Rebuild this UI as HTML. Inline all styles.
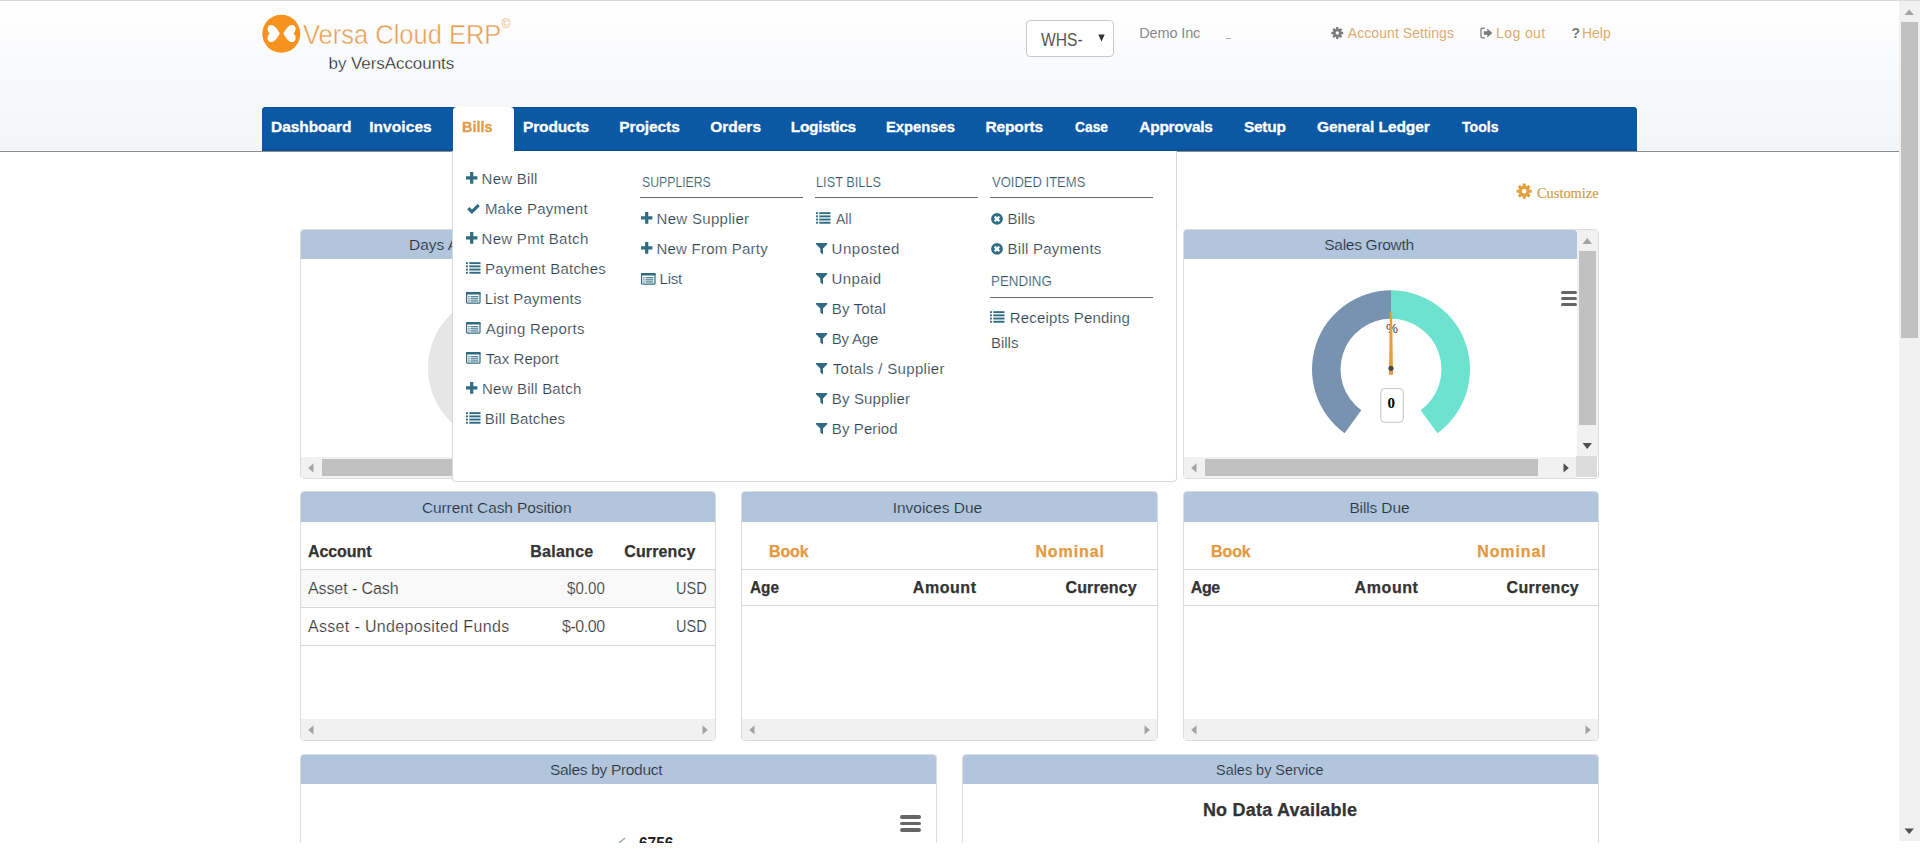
<!DOCTYPE html><html><head><meta charset="utf-8"><title>Versa Cloud ERP</title><style>html,body{margin:0;padding:0;width:1920px;height:852px;overflow:hidden;background:#fff}body{position:relative;font-family:"Liberation Sans",sans-serif}.t{position:absolute;white-space:nowrap}</style></head><body>
<div style="position:absolute;left:0px;top:0px;width:1920px;height:1px;background:#d9d9d9"></div>
<div style="position:absolute;left:0px;top:1px;width:1899px;height:150px;background:linear-gradient(#ffffff 0%,#f9fafc 40%,#f4f5f8 100%)"></div>
<div style="position:absolute;left:0px;top:151px;width:1899px;height:1px;background:#8c8c8c"></div>
<svg style="position:absolute;left:258px;top:10px;" width="48" height="48" viewBox="0 0 48 48">
<circle cx="23.3" cy="23.8" r="19" fill="#f6931f"/>
<g fill="#fff">
<path transform="translate(9.3,14.8)" d="M2.4,8.7 C-0.7,6.2 -0.6,0.3 3.8,0.1 C7.4,0 10.2,4.6 12.6,8.7 C10.2,12.8 7.4,17.4 3.8,17.3 C-0.6,17.1 -0.7,11.2 2.4,8.7 Z"/>
<path transform="translate(37.9,14.8) scale(-1,1)" d="M2.4,8.7 C-0.7,6.2 -0.6,0.3 3.8,0.1 C7.4,0 10.2,4.6 12.6,8.7 C10.2,12.8 7.4,17.4 3.8,17.3 C-0.6,17.1 -0.7,11.2 2.4,8.7 Z"/>
</g></svg>
<div class="t" style="left:302.70px;top:21.70px;font-family:'Liberation Sans';font-size:27px;line-height:27px;font-weight:normal;color:#e89f50;letter-spacing:0.000px;transform:scaleX(0.9441);transform-origin:0 0;-webkit-text-stroke:0.45px #fdfdfe;">Versa Cloud ERP</div>
<div class="t" style="left:501.50px;top:17.70px;font-family:'Liberation Sans';font-size:12px;line-height:12px;font-weight:normal;color:#f0b070;letter-spacing:0.000px;">©</div>
<div class="t" style="left:328.50px;top:55.20px;font-family:'Liberation Sans';font-size:17px;line-height:17px;font-weight:normal;color:#1a1a1a;letter-spacing:-0.066px;-webkit-text-stroke:0.3px #fafbfc;">by VersAccounts</div>
<div style="position:absolute;left:1026px;top:20px;width:86px;height:35px;background:#fff;border:1px solid #c8c8c8;border-radius:4px;box-sizing:content-box"></div>
<div class="t" style="left:1041.30px;top:29.80px;font-family:'Liberation Sans';font-size:19px;line-height:19px;font-weight:normal;color:#555;letter-spacing:0.000px;transform:scaleX(0.8226);transform-origin:0 0;">WHS-</div>
<svg style="position:absolute;left:1098px;top:34px;" width="8" height="8" viewBox="0 0 8 8"><path d="M0.3,0.6 H6.7 L3.5,7.4 Z" fill="#333"/></svg>
<div class="t" style="left:1139.20px;top:25.80px;font-family:'Liberation Sans';font-size:14.5px;line-height:14.5px;font-weight:normal;color:#8a8a8a;letter-spacing:-0.129px;">Demo Inc</div>
<div style="position:absolute;left:1226px;top:38px;width:5px;height:1px;background:#b0b0b0"></div>
<svg style="position:absolute;left:1331px;top:27px;" width="13" height="13" viewBox="0 0 13 13"><g fill="#7a7a7a"><circle cx="6.3" cy="6" r="4.3"/><path d="M5.15,9.30 L7.45,9.30 L7.45,11.90 L5.15,11.90 Z M3.15,7.52 L4.78,9.15 L2.94,10.99 L1.31,9.36 Z M3.00,4.85 L3.00,7.15 L0.40,7.15 L0.40,4.85 Z M4.78,2.85 L3.15,4.48 L1.31,2.64 L2.94,1.01 Z M7.45,2.70 L5.15,2.70 L5.15,0.10 L7.45,0.10 Z M9.45,4.48 L7.82,2.85 L9.66,1.01 L11.29,2.64 Z M9.60,7.15 L9.60,4.85 L12.20,4.85 L12.20,7.15 Z M7.82,9.15 L9.45,7.52 L11.29,9.36 L9.66,10.99 Z"/></g><circle cx="6.3" cy="6" r="1.7" fill="#f7f8fa"/></svg>
<div class="t" style="left:1347.80px;top:25.70px;font-family:'Liberation Sans';font-size:14px;line-height:14px;font-weight:normal;color:#dcab72;letter-spacing:0.069px;">Account Settings</div>
<svg style="position:absolute;left:1480px;top:27px;" width="13" height="12" viewBox="0 0 13 12"><path d="M4.8,1.2 H2.2 Q1,1.2 1,2.4 V9.6 Q1,10.8 2.2,10.8 H4.8" fill="none" stroke="#8a8a8a" stroke-width="1.4"/><path d="M3.8,4.2 H7.3 V1.6 L12.3,6 L7.3,10.4 V7.8 H3.8 Z" fill="#7a7a7a"/></svg>
<div class="t" style="left:1496.10px;top:25.70px;font-family:'Liberation Sans';font-size:14px;line-height:14px;font-weight:normal;color:#dcab72;letter-spacing:0.397px;">Log out</div>
<div class="t" style="left:1571.60px;top:25.70px;font-family:'Liberation Sans';font-size:14px;line-height:14px;font-weight:bold;color:#777;letter-spacing:0.000px;">?</div>
<div class="t" style="left:1582.00px;top:25.70px;font-family:'Liberation Sans';font-size:14px;line-height:14px;font-weight:normal;color:#dcab72;letter-spacing:-0.036px;">Help</div>
<div style="position:absolute;left:262px;top:107px;width:1375px;height:44px;background:#0b58a5;border-radius:4px 4px 0 0;box-shadow:inset 0 1px 0 #0a4f92, inset 0 -2px 0 #0a5096"></div>
<div style="position:absolute;left:453px;top:107px;width:61px;height:50px;background:#fff;border-radius:4px 4px 0 0"></div>
<div class="t" style="left:271.10px;top:119.30px;font-family:'Liberation Sans';font-size:15.5px;line-height:15.5px;font-weight:bold;color:#ffffff;letter-spacing:-0.074px;-webkit-text-stroke:0.3px #ffffff;">Dashboard</div>
<div class="t" style="left:369.20px;top:119.30px;font-family:'Liberation Sans';font-size:15.5px;line-height:15.5px;font-weight:bold;color:#ffffff;letter-spacing:0.070px;-webkit-text-stroke:0.3px #ffffff;">Invoices</div>
<div class="t" style="left:462.17px;top:119.30px;font-family:'Liberation Sans';font-size:15.5px;line-height:15.5px;font-weight:bold;color:#e59a45;letter-spacing:0.000px;transform:scaleX(0.9321);transform-origin:0 0;-webkit-text-stroke:0.3px #e59a45;">Bills</div>
<div class="t" style="left:523.00px;top:119.30px;font-family:'Liberation Sans';font-size:15.5px;line-height:15.5px;font-weight:bold;color:#ffffff;letter-spacing:-0.151px;-webkit-text-stroke:0.3px #ffffff;">Products</div>
<div class="t" style="left:619.20px;top:119.30px;font-family:'Liberation Sans';font-size:15.5px;line-height:15.5px;font-weight:bold;color:#ffffff;letter-spacing:-0.078px;-webkit-text-stroke:0.3px #ffffff;">Projects</div>
<div class="t" style="left:710.20px;top:119.30px;font-family:'Liberation Sans';font-size:15.5px;line-height:15.5px;font-weight:bold;color:#ffffff;letter-spacing:-0.002px;-webkit-text-stroke:0.3px #ffffff;">Orders</div>
<div class="t" style="left:790.80px;top:119.30px;font-family:'Liberation Sans';font-size:15.5px;line-height:15.5px;font-weight:bold;color:#ffffff;letter-spacing:-0.340px;-webkit-text-stroke:0.3px #ffffff;">Logistics</div>
<div class="t" style="left:886.45px;top:119.30px;font-family:'Liberation Sans';font-size:15.5px;line-height:15.5px;font-weight:bold;color:#ffffff;letter-spacing:0.000px;transform:scaleX(0.9526);transform-origin:0 0;-webkit-text-stroke:0.3px #ffffff;">Expenses</div>
<div class="t" style="left:985.40px;top:119.30px;font-family:'Liberation Sans';font-size:15.5px;line-height:15.5px;font-weight:bold;color:#ffffff;letter-spacing:-0.124px;-webkit-text-stroke:0.3px #ffffff;">Reports</div>
<div class="t" style="left:1074.50px;top:119.30px;font-family:'Liberation Sans';font-size:15.5px;line-height:15.5px;font-weight:bold;color:#ffffff;letter-spacing:0.000px;transform:scaleX(0.8922);transform-origin:0 0;-webkit-text-stroke:0.3px #ffffff;">Case</div>
<div class="t" style="left:1139.30px;top:119.30px;font-family:'Liberation Sans';font-size:15.5px;line-height:15.5px;font-weight:bold;color:#ffffff;letter-spacing:-0.272px;-webkit-text-stroke:0.3px #ffffff;">Approvals</div>
<div class="t" style="left:1243.90px;top:119.30px;font-family:'Liberation Sans';font-size:15.5px;line-height:15.5px;font-weight:bold;color:#ffffff;letter-spacing:-0.247px;-webkit-text-stroke:0.3px #ffffff;">Setup</div>
<div class="t" style="left:1317.00px;top:119.30px;font-family:'Liberation Sans';font-size:15.5px;line-height:15.5px;font-weight:bold;color:#ffffff;letter-spacing:-0.067px;-webkit-text-stroke:0.3px #ffffff;">General Ledger</div>
<div class="t" style="left:1461.80px;top:119.30px;font-family:'Liberation Sans';font-size:15.5px;line-height:15.5px;font-weight:bold;color:#ffffff;letter-spacing:0.000px;transform:scaleX(0.9125);transform-origin:0 0;-webkit-text-stroke:0.3px #ffffff;">Tools</div>
<div style="position:absolute;left:300px;top:229px;width:856px;height:248px;background:#fff;border:1px solid #dcdcdc;border-radius:4px"></div>
<div style="position:absolute;left:301px;top:230px;width:856px;height:29px;background:#b1c5dc;border-radius:3px 3px 0 0"></div>
<div class="t" style="left:409.00px;top:236.70px;font-family:'Liberation Sans';font-size:15.5px;line-height:15.5px;font-weight:normal;color:#28323c;letter-spacing:0.000px;-webkit-text-stroke:0.2px #b1c5dc;">Days AP Outstanding</div>
<svg style="position:absolute;left:420px;top:290px;" width="170" height="160" viewBox="0 0 170 160"><circle cx="83" cy="78" r="75" fill="#e6e6e6"/></svg>
<div style="position:absolute;left:301px;top:457px;width:856px;height:21px;background:#f1f1f1"></div>
<svg style="position:absolute;left:308px;top:463px;" width="6" height="10" viewBox="0 0 6 10"><path d="M5.5,0.2 V9.6 L0.2,4.9 Z" fill="#a3a3a3"/></svg>
<svg style="position:absolute;left:1144px;top:463px;" width="6" height="10" viewBox="0 0 6 10"><path d="M0.5,0.2 V9.6 L5.8,4.9 Z" fill="#a3a3a3"/></svg>
<div style="position:absolute;left:322px;top:459px;width:778px;height:17px;background:#c1c1c1"></div>
<div style="position:absolute;left:1183px;top:229px;width:414px;height:248px;background:#fff;border:1px solid #dcdcdc;border-radius:4px"></div>
<div style="position:absolute;left:1184px;top:230px;width:393px;height:29px;background:#b1c5dc;border-radius:3px 3px 0 0"></div>
<div class="t" style="left:1324.30px;top:236.90px;font-family:'Liberation Sans';font-size:15.5px;line-height:15.5px;font-weight:normal;color:#28323c;letter-spacing:-0.292px;-webkit-text-stroke:0.2px #b1c5dc;">Sales Growth</div>
<div style="position:absolute;left:1577px;top:230px;width:21px;height:227px;background:#f1f1f1"></div>
<svg style="position:absolute;left:1582px;top:237px;" width="11" height="8" viewBox="0 0 11 8"><path d="M0.5,7 H10 L5.25,1 Z" fill="#a3a3a3"/></svg>
<div style="position:absolute;left:1579px;top:251px;width:17px;height:174px;background:#c1c1c1"></div>
<svg style="position:absolute;left:1582px;top:442px;" width="11" height="8" viewBox="0 0 11 8"><path d="M0.5,1 H10 L5.25,7 Z" fill="#505050"/></svg>
<div style="position:absolute;left:1576px;top:456px;width:21px;height:21px;background:#dcdcdc"></div>
<div style="position:absolute;left:1184px;top:457px;width:392px;height:21px;background:#f1f1f1"></div>
<svg style="position:absolute;left:1191px;top:463px;" width="6" height="10" viewBox="0 0 6 10"><path d="M5.5,0.2 V9.6 L0.2,4.9 Z" fill="#a3a3a3"/></svg>
<svg style="position:absolute;left:1563px;top:463px;" width="6" height="10" viewBox="0 0 6 10"><path d="M0.5,0.2 V9.6 L5.8,4.9 Z" fill="#505050"/></svg>
<div style="position:absolute;left:1205px;top:459px;width:333px;height:17px;background:#c1c1c1"></div>
<div style="position:absolute;left:1561px;top:291px;width:16px;height:3.4px;background:#666;border-radius:1.5px"></div>
<div style="position:absolute;left:1561px;top:297px;width:16px;height:3.4px;background:#666;border-radius:1.5px"></div>
<div style="position:absolute;left:1561px;top:303px;width:16px;height:3.4px;background:#666;border-radius:1.5px"></div>
<div class="t" style="left:1386.00px;top:322.30px;font-family:'Liberation Sans';font-size:13.5px;line-height:13.5px;font-weight:normal;color:#3a3a3a;letter-spacing:0.000px;">%</div>
<svg style="position:absolute;left:1300px;top:280px;" width="180" height="160" viewBox="0 0 180 160"><path d="M44.56,153.21 A79,79 0 0 1 91.00,10.30 L91.00,38.80 A50.5,50.5 0 0 0 61.32,130.16 Z" fill="#7893b0"/><path d="M91.00,10.30 A79,79 0 0 1 137.44,153.21 L120.68,130.16 A50.5,50.5 0 0 0 91.00,38.80 Z" fill="#6ce2cf"/><path d="M89.90,32 L92.10,32 L92.90,89.30 L92.90,95 L89.10,95 L89.10,89.30 Z" fill="#e99c3d"/><circle cx="91.00" cy="88.30" r="2.6" fill="#4a4a4a"/><rect x="80.8" y="108.6" width="22.5" height="33.6" rx="3.5" fill="#fff" stroke="#c4c4c4" stroke-width="1"/></svg>
<div class="t" style="left:1387.40px;top:396.30px;font-family:'Liberation Serif';font-size:15px;line-height:15px;font-weight:bold;color:#000;letter-spacing:0.000px;">0</div>
<div style="position:absolute;left:300px;top:491px;width:414px;height:248px;background:#fff;border:1px solid #dcdcdc;border-radius:4px"></div>
<div style="position:absolute;left:301px;top:492px;width:414px;height:30px;background:#b1c5dc;border-radius:3px 3px 0 0"></div>
<div class="t" style="left:421.90px;top:500.00px;font-family:'Liberation Sans';font-size:15.5px;line-height:15.5px;font-weight:normal;color:#28323c;letter-spacing:-0.100px;-webkit-text-stroke:0.2px #b1c5dc;">Current Cash Position</div>
<div class="t" style="left:307.90px;top:543.60px;font-family:'Liberation Sans';font-size:16px;line-height:16px;font-weight:bold;color:#333;letter-spacing:-0.045px;-webkit-text-stroke:0.25px #333">Account</div>
<div class="t" style="left:530.30px;top:543.60px;font-family:'Liberation Sans';font-size:16px;line-height:16px;font-weight:bold;color:#333;letter-spacing:0.255px;-webkit-text-stroke:0.25px #333">Balance</div>
<div class="t" style="left:624.30px;top:543.60px;font-family:'Liberation Sans';font-size:16px;line-height:16px;font-weight:bold;color:#333;letter-spacing:0.107px;-webkit-text-stroke:0.25px #333">Currency</div>
<div style="position:absolute;left:301px;top:569px;width:414px;height:1px;background:#d6d6d6"></div>
<div style="position:absolute;left:301px;top:570px;width:414px;height:37px;background:#f9f9f9"></div>
<div class="t" style="left:307.90px;top:580.70px;font-family:'Liberation Sans';font-size:16px;line-height:16px;font-weight:normal;color:#383838;letter-spacing:-0.072px;-webkit-text-stroke:0.2px #f9f9f9;">Asset - Cash</div>
<div class="t" style="left:567.40px;top:580.70px;font-family:'Liberation Sans';font-size:16px;line-height:16px;font-weight:normal;color:#383838;letter-spacing:0.000px;transform:scaleX(0.9442);transform-origin:0 0;-webkit-text-stroke:0.2px #f9f9f9;">$0.00</div>
<div class="t" style="left:676.49px;top:580.70px;font-family:'Liberation Sans';font-size:16px;line-height:16px;font-weight:normal;color:#383838;letter-spacing:0.000px;transform:scaleX(0.9092);transform-origin:0 0;-webkit-text-stroke:0.2px #f9f9f9;">USD</div>
<div style="position:absolute;left:301px;top:607px;width:414px;height:1px;background:#d6d6d6"></div>
<div class="t" style="left:307.90px;top:618.60px;font-family:'Liberation Sans';font-size:16px;line-height:16px;font-weight:normal;color:#383838;letter-spacing:0.346px;-webkit-text-stroke:0.2px #fff;">Asset - Undeposited Funds</div>
<div class="t" style="left:561.90px;top:618.60px;font-family:'Liberation Sans';font-size:16px;line-height:16px;font-weight:normal;color:#383838;letter-spacing:-0.414px;-webkit-text-stroke:0.2px #fff;">$-0.00</div>
<div class="t" style="left:676.49px;top:618.60px;font-family:'Liberation Sans';font-size:16px;line-height:16px;font-weight:normal;color:#383838;letter-spacing:0.000px;transform:scaleX(0.9092);transform-origin:0 0;-webkit-text-stroke:0.2px #fff;">USD</div>
<div style="position:absolute;left:301px;top:645px;width:414px;height:1px;background:#d6d6d6"></div>
<div style="position:absolute;left:301px;top:719px;width:414px;height:21px;background:#f1f1f1"></div>
<svg style="position:absolute;left:308px;top:725px;" width="6" height="10" viewBox="0 0 6 10"><path d="M5.5,0.2 V9.6 L0.2,4.9 Z" fill="#a3a3a3"/></svg>
<svg style="position:absolute;left:702px;top:725px;" width="6" height="10" viewBox="0 0 6 10"><path d="M0.5,0.2 V9.6 L5.8,4.9 Z" fill="#a3a3a3"/></svg>
<div style="position:absolute;left:741px;top:491px;width:415px;height:248px;background:#fff;border:1px solid #dcdcdc;border-radius:4px"></div>
<div style="position:absolute;left:742px;top:492px;width:415px;height:30px;background:#b1c5dc;border-radius:3px 3px 0 0"></div>
<div class="t" style="left:892.70px;top:500.00px;font-family:'Liberation Sans';font-size:15.5px;line-height:15.5px;font-weight:normal;color:#28323c;letter-spacing:-0.016px;-webkit-text-stroke:0.2px #b1c5dc;">Invoices Due</div>
<div class="t" style="left:769.10px;top:544.00px;font-family:'Liberation Sans';font-size:16px;line-height:16px;font-weight:bold;color:#e5993f;letter-spacing:-0.167px;-webkit-text-stroke:0.25px #e5993f">Book</div>
<div class="t" style="left:1035.40px;top:544.00px;font-family:'Liberation Sans';font-size:16px;line-height:16px;font-weight:bold;color:#e5993f;letter-spacing:0.905px;-webkit-text-stroke:0.25px #e5993f">Nominal</div>
<div style="position:absolute;left:742px;top:569px;width:415px;height:1px;background:#d6d6d6"></div>
<div class="t" style="left:749.50px;top:579.50px;font-family:'Liberation Sans';font-size:16px;line-height:16px;font-weight:bold;color:#333;letter-spacing:0.000px;transform:scaleX(0.9595);transform-origin:0 0;-webkit-text-stroke:0.25px #333">Age</div>
<div class="t" style="left:912.80px;top:579.50px;font-family:'Liberation Sans';font-size:16px;line-height:16px;font-weight:bold;color:#333;letter-spacing:0.560px;-webkit-text-stroke:0.25px #333">Amount</div>
<div class="t" style="left:1065.50px;top:579.50px;font-family:'Liberation Sans';font-size:16px;line-height:16px;font-weight:bold;color:#333;letter-spacing:0.135px;-webkit-text-stroke:0.25px #333">Currency</div>
<div style="position:absolute;left:742px;top:605px;width:415px;height:1px;background:#d6d6d6"></div>
<div style="position:absolute;left:742px;top:719px;width:415px;height:21px;background:#f1f1f1"></div>
<svg style="position:absolute;left:749px;top:725px;" width="6" height="10" viewBox="0 0 6 10"><path d="M5.5,0.2 V9.6 L0.2,4.9 Z" fill="#a3a3a3"/></svg>
<svg style="position:absolute;left:1144px;top:725px;" width="6" height="10" viewBox="0 0 6 10"><path d="M0.5,0.2 V9.6 L5.8,4.9 Z" fill="#a3a3a3"/></svg>
<div style="position:absolute;left:1183px;top:491px;width:414px;height:248px;background:#fff;border:1px solid #dcdcdc;border-radius:4px"></div>
<div style="position:absolute;left:1184px;top:492px;width:414px;height:30px;background:#b1c5dc;border-radius:3px 3px 0 0"></div>
<div class="t" style="left:1349.40px;top:500.00px;font-family:'Liberation Sans';font-size:15.5px;line-height:15.5px;font-weight:normal;color:#28323c;letter-spacing:-0.130px;-webkit-text-stroke:0.2px #b1c5dc;">Bills Due</div>
<div class="t" style="left:1211.10px;top:544.00px;font-family:'Liberation Sans';font-size:16px;line-height:16px;font-weight:bold;color:#e5993f;letter-spacing:-0.134px;-webkit-text-stroke:0.25px #e5993f">Book</div>
<div class="t" style="left:1477.20px;top:544.00px;font-family:'Liberation Sans';font-size:16px;line-height:16px;font-weight:bold;color:#e5993f;letter-spacing:0.905px;-webkit-text-stroke:0.25px #e5993f">Nominal</div>
<div style="position:absolute;left:1184px;top:569px;width:414px;height:1px;background:#d6d6d6"></div>
<div class="t" style="left:1190.80px;top:579.50px;font-family:'Liberation Sans';font-size:16px;line-height:16px;font-weight:bold;color:#333;letter-spacing:-0.414px;-webkit-text-stroke:0.25px #333">Age</div>
<div class="t" style="left:1354.60px;top:579.50px;font-family:'Liberation Sans';font-size:16px;line-height:16px;font-weight:bold;color:#333;letter-spacing:0.580px;-webkit-text-stroke:0.25px #333">Amount</div>
<div class="t" style="left:1506.60px;top:579.50px;font-family:'Liberation Sans';font-size:16px;line-height:16px;font-weight:bold;color:#333;letter-spacing:0.264px;-webkit-text-stroke:0.25px #333">Currency</div>
<div style="position:absolute;left:1184px;top:605px;width:414px;height:1px;background:#d6d6d6"></div>
<div style="position:absolute;left:1184px;top:719px;width:414px;height:21px;background:#f1f1f1"></div>
<svg style="position:absolute;left:1191px;top:725px;" width="6" height="10" viewBox="0 0 6 10"><path d="M5.5,0.2 V9.6 L0.2,4.9 Z" fill="#a3a3a3"/></svg>
<svg style="position:absolute;left:1585px;top:725px;" width="6" height="10" viewBox="0 0 6 10"><path d="M0.5,0.2 V9.6 L5.8,4.9 Z" fill="#a3a3a3"/></svg>
<div style="position:absolute;left:300px;top:754px;width:635px;height:118px;background:#fff;border:1px solid #dcdcdc;border-radius:4px"></div>
<div style="position:absolute;left:301px;top:755px;width:635px;height:29px;background:#b1c5dc;border-radius:3px 3px 0 0"></div>
<div class="t" style="left:549.90px;top:761.90px;font-family:'Liberation Sans';font-size:15.5px;line-height:15.5px;font-weight:normal;color:#28323c;letter-spacing:-0.304px;-webkit-text-stroke:0.2px #b1c5dc;">Sales by Product</div>
<div style="position:absolute;left:899.5px;top:815px;width:21px;height:3.5px;background:#666;border-radius:2px"></div>
<div style="position:absolute;left:899.5px;top:821.5px;width:21px;height:3.5px;background:#666;border-radius:2px"></div>
<div style="position:absolute;left:899.5px;top:828px;width:21px;height:3.5px;background:#666;border-radius:2px"></div>
<div class="t" style="left:638.80px;top:835.00px;font-family:'Liberation Sans';font-size:17px;line-height:17px;font-weight:bold;color:#222;letter-spacing:0.000px;transform:scaleX(0.9100);transform-origin:0 0;">6756</div>
<svg style="position:absolute;left:618px;top:836px;" width="10" height="8" viewBox="0 0 10 8"><path d="M1,7 L7,2" stroke="#9ab" stroke-width="1.6"/></svg>
<div style="position:absolute;left:962px;top:754px;width:635px;height:118px;background:#fff;border:1px solid #dcdcdc;border-radius:4px"></div>
<div style="position:absolute;left:963px;top:755px;width:635px;height:29px;background:#b1c5dc;border-radius:3px 3px 0 0"></div>
<div class="t" style="left:1215.70px;top:761.70px;font-family:'Liberation Sans';font-size:15.5px;line-height:15.5px;font-weight:normal;color:#28323c;letter-spacing:0.000px;transform:scaleX(0.9310);transform-origin:0 0;-webkit-text-stroke:0.2px #b1c5dc;">Sales by Service</div>
<div class="t" style="left:1202.90px;top:800.80px;font-family:'Liberation Sans';font-size:18px;line-height:18px;font-weight:bold;color:#333;letter-spacing:0.214px;-webkit-text-stroke:0.25px #333">No Data Available</div>
<div style="position:absolute;left:0px;top:843px;width:1899px;height:9px;background:#fff"></div>
<div style="position:absolute;left:452px;top:151px;width:723px;height:330px;background:#fff;border:1px solid #d9d9d9;border-top:none;border-radius:0 0 4px 4px;box-sizing:content-box"></div>
<div style="position:absolute;left:453px;top:140px;width:61px;height:12px;background:#fff"></div>
<svg style="position:absolute;left:465.5px;top:172.0px;" width="12" height="12" viewBox="0 0 12 12"><path d="M4.1,0 H7.3 V4.3 H11.4 V7.5 H7.3 V11.8 H4.1 V7.5 H0 V4.3 H4.1 Z" fill="#2f6c83"/></svg>
<div class="t" style="left:481.60px;top:170.60px;font-family:'Liberation Sans';font-size:15px;line-height:15px;font-weight:normal;color:#2c4150;letter-spacing:0.236px;-webkit-text-stroke:0.2px #fff;">New Bill</div>
<svg style="position:absolute;left:466.5px;top:204.1px;" width="13" height="10" viewBox="0 0 13 10"><path d="M0.2,5.2 L2.4,3 L4.9,5.5 L10.6,0 L12.8,2.2 L4.9,10 Z" fill="#2f6c83"/></svg>
<div class="t" style="left:484.90px;top:200.60px;font-family:'Liberation Sans';font-size:15px;line-height:15px;font-weight:normal;color:#2c4150;letter-spacing:0.239px;-webkit-text-stroke:0.2px #fff;">Make Payment</div>
<svg style="position:absolute;left:465.5px;top:232.0px;" width="12" height="12" viewBox="0 0 12 12"><path d="M4.1,0 H7.3 V4.3 H11.4 V7.5 H7.3 V11.8 H4.1 V7.5 H0 V4.3 H4.1 Z" fill="#2f6c83"/></svg>
<div class="t" style="left:481.60px;top:230.60px;font-family:'Liberation Sans';font-size:15px;line-height:15px;font-weight:normal;color:#2c4150;letter-spacing:0.273px;-webkit-text-stroke:0.2px #fff;">New Pmt Batch</div>
<svg style="position:absolute;left:465.5px;top:262px;" width="15" height="12" viewBox="0 0 15 12"><rect x="0" y="0.2" width="1.9" height="1.9" fill="#2f6c83"/><rect x="3.3" y="0.2" width="11.2" height="1.9" fill="#2f6c83"/><rect x="0" y="3.4" width="1.9" height="1.9" fill="#2f6c83"/><rect x="3.3" y="3.4" width="11.2" height="1.9" fill="#2f6c83"/><rect x="0" y="6.6" width="1.9" height="1.9" fill="#2f6c83"/><rect x="3.3" y="6.6" width="11.2" height="1.9" fill="#2f6c83"/><rect x="0" y="9.8" width="1.9" height="1.9" fill="#2f6c83"/><rect x="3.3" y="9.8" width="11.2" height="1.9" fill="#2f6c83"/></svg>
<div class="t" style="left:484.90px;top:260.60px;font-family:'Liberation Sans';font-size:15px;line-height:15px;font-weight:normal;color:#2c4150;letter-spacing:0.238px;-webkit-text-stroke:0.2px #fff;">Payment Batches</div>
<svg style="position:absolute;left:465.8px;top:292.40000000000003px;" width="15" height="12" viewBox="0 0 15 12"><rect x="0.6" y="0.6" width="13.4" height="10.6" rx="1" fill="#fff" stroke="#2f6c83" stroke-width="1.2"/><rect x="0" y="0" width="14.6" height="2.6" rx="0.8" fill="#2f6c83"/><rect x="2.2" y="4.2" width="1.4" height="1.1" fill="#2f6c83"/><rect x="4.5" y="4.2" width="7.9" height="1.1" fill="#2f6c83"/><rect x="2.2" y="6.3" width="1.4" height="1.1" fill="#2f6c83"/><rect x="4.5" y="6.3" width="7.9" height="1.1" fill="#2f6c83"/><rect x="2.2" y="8.4" width="1.4" height="1.1" fill="#2f6c83"/><rect x="4.5" y="8.4" width="7.9" height="1.1" fill="#2f6c83"/></svg>
<div class="t" style="left:484.80px;top:290.60px;font-family:'Liberation Sans';font-size:15px;line-height:15px;font-weight:normal;color:#2c4150;letter-spacing:0.200px;-webkit-text-stroke:0.2px #fff;">List Payments</div>
<svg style="position:absolute;left:465.8px;top:322.40000000000003px;" width="15" height="12" viewBox="0 0 15 12"><rect x="0.6" y="0.6" width="13.4" height="10.6" rx="1" fill="#fff" stroke="#2f6c83" stroke-width="1.2"/><rect x="0" y="0" width="14.6" height="2.6" rx="0.8" fill="#2f6c83"/><rect x="2.2" y="4.2" width="1.4" height="1.1" fill="#2f6c83"/><rect x="4.5" y="4.2" width="7.9" height="1.1" fill="#2f6c83"/><rect x="2.2" y="6.3" width="1.4" height="1.1" fill="#2f6c83"/><rect x="4.5" y="6.3" width="7.9" height="1.1" fill="#2f6c83"/><rect x="2.2" y="8.4" width="1.4" height="1.1" fill="#2f6c83"/><rect x="4.5" y="8.4" width="7.9" height="1.1" fill="#2f6c83"/></svg>
<div class="t" style="left:485.80px;top:320.60px;font-family:'Liberation Sans';font-size:15px;line-height:15px;font-weight:normal;color:#2c4150;letter-spacing:0.296px;-webkit-text-stroke:0.2px #fff;">Aging Reports</div>
<svg style="position:absolute;left:465.8px;top:352.40000000000003px;" width="15" height="12" viewBox="0 0 15 12"><rect x="0.6" y="0.6" width="13.4" height="10.6" rx="1" fill="#fff" stroke="#2f6c83" stroke-width="1.2"/><rect x="0" y="0" width="14.6" height="2.6" rx="0.8" fill="#2f6c83"/><rect x="2.2" y="4.2" width="1.4" height="1.1" fill="#2f6c83"/><rect x="4.5" y="4.2" width="7.9" height="1.1" fill="#2f6c83"/><rect x="2.2" y="6.3" width="1.4" height="1.1" fill="#2f6c83"/><rect x="4.5" y="6.3" width="7.9" height="1.1" fill="#2f6c83"/><rect x="2.2" y="8.4" width="1.4" height="1.1" fill="#2f6c83"/><rect x="4.5" y="8.4" width="7.9" height="1.1" fill="#2f6c83"/></svg>
<div class="t" style="left:485.80px;top:350.60px;font-family:'Liberation Sans';font-size:15px;line-height:15px;font-weight:normal;color:#2c4150;letter-spacing:0.048px;-webkit-text-stroke:0.2px #fff;">Tax Report</div>
<svg style="position:absolute;left:465.5px;top:382.0px;" width="12" height="12" viewBox="0 0 12 12"><path d="M4.1,0 H7.3 V4.3 H11.4 V7.5 H7.3 V11.8 H4.1 V7.5 H0 V4.3 H4.1 Z" fill="#2f6c83"/></svg>
<div class="t" style="left:482.10px;top:380.60px;font-family:'Liberation Sans';font-size:15px;line-height:15px;font-weight:normal;color:#2c4150;letter-spacing:0.188px;-webkit-text-stroke:0.2px #fff;">New Bill Batch</div>
<svg style="position:absolute;left:465.5px;top:412px;" width="15" height="12" viewBox="0 0 15 12"><rect x="0" y="0.2" width="1.9" height="1.9" fill="#2f6c83"/><rect x="3.3" y="0.2" width="11.2" height="1.9" fill="#2f6c83"/><rect x="0" y="3.4" width="1.9" height="1.9" fill="#2f6c83"/><rect x="3.3" y="3.4" width="11.2" height="1.9" fill="#2f6c83"/><rect x="0" y="6.6" width="1.9" height="1.9" fill="#2f6c83"/><rect x="3.3" y="6.6" width="11.2" height="1.9" fill="#2f6c83"/><rect x="0" y="9.8" width="1.9" height="1.9" fill="#2f6c83"/><rect x="3.3" y="9.8" width="11.2" height="1.9" fill="#2f6c83"/></svg>
<div class="t" style="left:484.80px;top:410.60px;font-family:'Liberation Sans';font-size:15px;line-height:15px;font-weight:normal;color:#2c4150;letter-spacing:0.166px;-webkit-text-stroke:0.2px #fff;">Bill Batches</div>
<div class="t" style="left:641.50px;top:175.00px;font-family:'Liberation Sans';font-size:14.2px;line-height:14.2px;font-weight:normal;color:#2d566b;letter-spacing:0.000px;transform:scaleX(0.8639);transform-origin:0 0;-webkit-text-stroke:0.2px #fff;">SUPPLIERS</div>
<div style="position:absolute;left:640px;top:197px;width:163px;height:1px;background:#6b6b6b"></div>
<div class="t" style="left:816.00px;top:175.00px;font-family:'Liberation Sans';font-size:14.2px;line-height:14.2px;font-weight:normal;color:#2d566b;letter-spacing:0.000px;transform:scaleX(0.8989);transform-origin:0 0;-webkit-text-stroke:0.2px #fff;">LIST BILLS</div>
<div style="position:absolute;left:815px;top:197px;width:163px;height:1px;background:#6b6b6b"></div>
<div class="t" style="left:991.90px;top:175.00px;font-family:'Liberation Sans';font-size:14.2px;line-height:14.2px;font-weight:normal;color:#2d566b;letter-spacing:0.000px;transform:scaleX(0.9178);transform-origin:0 0;-webkit-text-stroke:0.2px #fff;">VOIDED ITEMS</div>
<div style="position:absolute;left:990px;top:197px;width:163px;height:1px;background:#6b6b6b"></div>
<div class="t" style="left:990.96px;top:273.60px;font-family:'Liberation Sans';font-size:14.2px;line-height:14.2px;font-weight:normal;color:#2d566b;letter-spacing:0.000px;transform:scaleX(0.9424);transform-origin:0 0;-webkit-text-stroke:0.2px #fff;">PENDING</div>
<div style="position:absolute;left:990px;top:297px;width:163px;height:1px;background:#6b6b6b"></div>
<svg style="position:absolute;left:640.5px;top:212.1px;" width="12" height="12" viewBox="0 0 12 12"><path d="M4.1,0 H7.3 V4.3 H11.4 V7.5 H7.3 V11.8 H4.1 V7.5 H0 V4.3 H4.1 Z" fill="#2f6c83"/></svg>
<div class="t" style="left:656.60px;top:210.70px;font-family:'Liberation Sans';font-size:15px;line-height:15px;font-weight:normal;color:#2c4150;letter-spacing:0.299px;-webkit-text-stroke:0.2px #fff;">New Supplier</div>
<svg style="position:absolute;left:640.5px;top:242.1px;" width="12" height="12" viewBox="0 0 12 12"><path d="M4.1,0 H7.3 V4.3 H11.4 V7.5 H7.3 V11.8 H4.1 V7.5 H0 V4.3 H4.1 Z" fill="#2f6c83"/></svg>
<div class="t" style="left:656.50px;top:240.70px;font-family:'Liberation Sans';font-size:15px;line-height:15px;font-weight:normal;color:#2c4150;letter-spacing:0.219px;-webkit-text-stroke:0.2px #fff;">New From Party</div>
<svg style="position:absolute;left:640.8px;top:272.5px;" width="15" height="12" viewBox="0 0 15 12"><rect x="0.6" y="0.6" width="13.4" height="10.6" rx="1" fill="#fff" stroke="#2f6c83" stroke-width="1.2"/><rect x="0" y="0" width="14.6" height="2.6" rx="0.8" fill="#2f6c83"/><rect x="2.2" y="4.2" width="1.4" height="1.1" fill="#2f6c83"/><rect x="4.5" y="4.2" width="7.9" height="1.1" fill="#2f6c83"/><rect x="2.2" y="6.3" width="1.4" height="1.1" fill="#2f6c83"/><rect x="4.5" y="6.3" width="7.9" height="1.1" fill="#2f6c83"/><rect x="2.2" y="8.4" width="1.4" height="1.1" fill="#2f6c83"/><rect x="4.5" y="8.4" width="7.9" height="1.1" fill="#2f6c83"/></svg>
<div class="t" style="left:659.50px;top:270.70px;font-family:'Liberation Sans';font-size:15px;line-height:15px;font-weight:normal;color:#2c4150;letter-spacing:-0.192px;-webkit-text-stroke:0.2px #fff;">List</div>
<svg style="position:absolute;left:815.5px;top:212px;" width="15" height="12" viewBox="0 0 15 12"><rect x="0" y="0.2" width="1.9" height="1.9" fill="#2f6c83"/><rect x="3.3" y="0.2" width="11.2" height="1.9" fill="#2f6c83"/><rect x="0" y="3.4" width="1.9" height="1.9" fill="#2f6c83"/><rect x="3.3" y="3.4" width="11.2" height="1.9" fill="#2f6c83"/><rect x="0" y="6.6" width="1.9" height="1.9" fill="#2f6c83"/><rect x="3.3" y="6.6" width="11.2" height="1.9" fill="#2f6c83"/><rect x="0" y="9.8" width="1.9" height="1.9" fill="#2f6c83"/><rect x="3.3" y="9.8" width="11.2" height="1.9" fill="#2f6c83"/></svg>
<div class="t" style="left:835.50px;top:210.70px;font-family:'Liberation Sans';font-size:15px;line-height:15px;font-weight:normal;color:#2c4150;letter-spacing:0.000px;transform:scaleX(0.9304);transform-origin:0 0;-webkit-text-stroke:0.2px #fff;">All</div>
<svg style="position:absolute;left:815.8px;top:243.1px;" width="12" height="12" viewBox="0 0 12 12"><path d="M0,0 H11.2 V1.2 L7,5.4 V11.6 L4.3,9.4 V5.4 L0,1.2 Z" fill="#2f6c83"/></svg>
<div class="t" style="left:831.60px;top:240.70px;font-family:'Liberation Sans';font-size:15px;line-height:15px;font-weight:normal;color:#2c4150;letter-spacing:0.519px;-webkit-text-stroke:0.2px #fff;">Unposted</div>
<svg style="position:absolute;left:815.8px;top:273.09999999999997px;" width="12" height="12" viewBox="0 0 12 12"><path d="M0,0 H11.2 V1.2 L7,5.4 V11.6 L4.3,9.4 V5.4 L0,1.2 Z" fill="#2f6c83"/></svg>
<div class="t" style="left:831.60px;top:270.70px;font-family:'Liberation Sans';font-size:15px;line-height:15px;font-weight:normal;color:#2c4150;letter-spacing:0.402px;-webkit-text-stroke:0.2px #fff;">Unpaid</div>
<svg style="position:absolute;left:815.8px;top:303.09999999999997px;" width="12" height="12" viewBox="0 0 12 12"><path d="M0,0 H11.2 V1.2 L7,5.4 V11.6 L4.3,9.4 V5.4 L0,1.2 Z" fill="#2f6c83"/></svg>
<div class="t" style="left:831.80px;top:300.70px;font-family:'Liberation Sans';font-size:15px;line-height:15px;font-weight:normal;color:#2c4150;letter-spacing:0.139px;-webkit-text-stroke:0.2px #fff;">By Total</div>
<svg style="position:absolute;left:815.8px;top:333.09999999999997px;" width="12" height="12" viewBox="0 0 12 12"><path d="M0,0 H11.2 V1.2 L7,5.4 V11.6 L4.3,9.4 V5.4 L0,1.2 Z" fill="#2f6c83"/></svg>
<div class="t" style="left:831.80px;top:330.70px;font-family:'Liberation Sans';font-size:15px;line-height:15px;font-weight:normal;color:#2c4150;letter-spacing:-0.204px;-webkit-text-stroke:0.2px #fff;">By Age</div>
<svg style="position:absolute;left:815.8px;top:363.09999999999997px;" width="12" height="12" viewBox="0 0 12 12"><path d="M0,0 H11.2 V1.2 L7,5.4 V11.6 L4.3,9.4 V5.4 L0,1.2 Z" fill="#2f6c83"/></svg>
<div class="t" style="left:832.80px;top:360.70px;font-family:'Liberation Sans';font-size:15px;line-height:15px;font-weight:normal;color:#2c4150;letter-spacing:0.311px;-webkit-text-stroke:0.2px #fff;">Totals / Supplier</div>
<svg style="position:absolute;left:815.8px;top:393.09999999999997px;" width="12" height="12" viewBox="0 0 12 12"><path d="M0,0 H11.2 V1.2 L7,5.4 V11.6 L4.3,9.4 V5.4 L0,1.2 Z" fill="#2f6c83"/></svg>
<div class="t" style="left:831.80px;top:390.70px;font-family:'Liberation Sans';font-size:15px;line-height:15px;font-weight:normal;color:#2c4150;letter-spacing:0.149px;-webkit-text-stroke:0.2px #fff;">By Supplier</div>
<svg style="position:absolute;left:815.8px;top:423.09999999999997px;" width="12" height="12" viewBox="0 0 12 12"><path d="M0,0 H11.2 V1.2 L7,5.4 V11.6 L4.3,9.4 V5.4 L0,1.2 Z" fill="#2f6c83"/></svg>
<div class="t" style="left:831.80px;top:420.70px;font-family:'Liberation Sans';font-size:15px;line-height:15px;font-weight:normal;color:#2c4150;letter-spacing:0.101px;-webkit-text-stroke:0.2px #fff;">By Period</div>
<svg style="position:absolute;left:991.0px;top:212.5px;" width="13" height="13" viewBox="0 0 13 13"><circle cx="6" cy="5.9" r="5.9" fill="#2f6c83"/><path d="M3.7,3.6 L8.3,8.2 M8.3,3.6 L3.7,8.2" stroke="#fff" stroke-width="2.3"/></svg>
<div class="t" style="left:1007.60px;top:210.50px;font-family:'Liberation Sans';font-size:15px;line-height:15px;font-weight:normal;color:#2c4150;letter-spacing:-0.026px;-webkit-text-stroke:0.2px #fff;">Bills</div>
<svg style="position:absolute;left:991.0px;top:242.5px;" width="13" height="13" viewBox="0 0 13 13"><circle cx="6" cy="5.9" r="5.9" fill="#2f6c83"/><path d="M3.7,3.6 L8.3,8.2 M8.3,3.6 L3.7,8.2" stroke="#fff" stroke-width="2.3"/></svg>
<div class="t" style="left:1007.60px;top:240.50px;font-family:'Liberation Sans';font-size:15px;line-height:15px;font-weight:normal;color:#2c4150;letter-spacing:0.236px;-webkit-text-stroke:0.2px #fff;">Bill Payments</div>
<svg style="position:absolute;left:990.3px;top:311px;" width="15" height="12" viewBox="0 0 15 12"><rect x="0" y="0.2" width="1.9" height="1.9" fill="#2f6c83"/><rect x="3.3" y="0.2" width="11.2" height="1.9" fill="#2f6c83"/><rect x="0" y="3.4" width="1.9" height="1.9" fill="#2f6c83"/><rect x="3.3" y="3.4" width="11.2" height="1.9" fill="#2f6c83"/><rect x="0" y="6.6" width="1.9" height="1.9" fill="#2f6c83"/><rect x="3.3" y="6.6" width="11.2" height="1.9" fill="#2f6c83"/><rect x="0" y="9.8" width="1.9" height="1.9" fill="#2f6c83"/><rect x="3.3" y="9.8" width="11.2" height="1.9" fill="#2f6c83"/></svg>
<div class="t" style="left:1009.70px;top:310.00px;font-family:'Liberation Sans';font-size:15px;line-height:15px;font-weight:normal;color:#2c4150;letter-spacing:0.171px;-webkit-text-stroke:0.2px #fff;">Receipts Pending</div>
<div class="t" style="left:990.90px;top:335.00px;font-family:'Liberation Sans';font-size:15px;line-height:15px;font-weight:normal;color:#2c4150;letter-spacing:-0.001px;-webkit-text-stroke:0.2px #fff;">Bills</div>
<svg style="position:absolute;left:1516px;top:183px;" width="17" height="17" viewBox="0 0 17 17"><g fill="#e3a13f"><circle cx="8.2" cy="8.2" r="5.6"/><path d="M6.70,12.80 L9.70,12.80 L9.70,15.80 L6.70,15.80 Z M3.89,10.39 L6.01,12.51 L3.89,14.63 L1.77,12.51 Z M3.60,6.70 L3.60,9.70 L0.60,9.70 L0.60,6.70 Z M6.01,3.89 L3.89,6.01 L1.77,3.89 L3.89,1.77 Z M9.70,3.60 L6.70,3.60 L6.70,0.60 L9.70,0.60 Z M12.51,6.01 L10.39,3.89 L12.51,1.77 L14.63,3.89 Z M12.80,9.70 L12.80,6.70 L15.80,6.70 L15.80,9.70 Z M10.39,12.51 L12.51,10.39 L14.63,12.51 L12.51,14.63 Z"/></g><circle cx="8.2" cy="8.2" r="2.3" fill="#fff"/></svg>
<div class="t" style="left:1537.00px;top:184.70px;font-family:'Liberation Serif';font-size:15.5px;line-height:15.5px;font-weight:normal;color:#cf9c4e;letter-spacing:0.000px;transform:scaleX(0.9289);transform-origin:0 0;-webkit-text-stroke:0.2px #cf9c4e;">Customize</div>
<div style="position:absolute;left:1899px;top:1px;width:21px;height:840px;background:#f1f1f1"></div>
<svg style="position:absolute;left:1904px;top:9px;" width="11" height="7" viewBox="0 0 11 7"><path d="M0.5,6 H10 L5.25,0.5 Z" fill="#a3a3a3"/></svg>
<div style="position:absolute;left:1901px;top:22px;width:17px;height:316px;background:#c1c1c1"></div>
<svg style="position:absolute;left:1904px;top:828px;" width="11" height="7" viewBox="0 0 11 7"><path d="M0.5,0.5 H10 L5.25,6 Z" fill="#505050"/></svg>
</body></html>
